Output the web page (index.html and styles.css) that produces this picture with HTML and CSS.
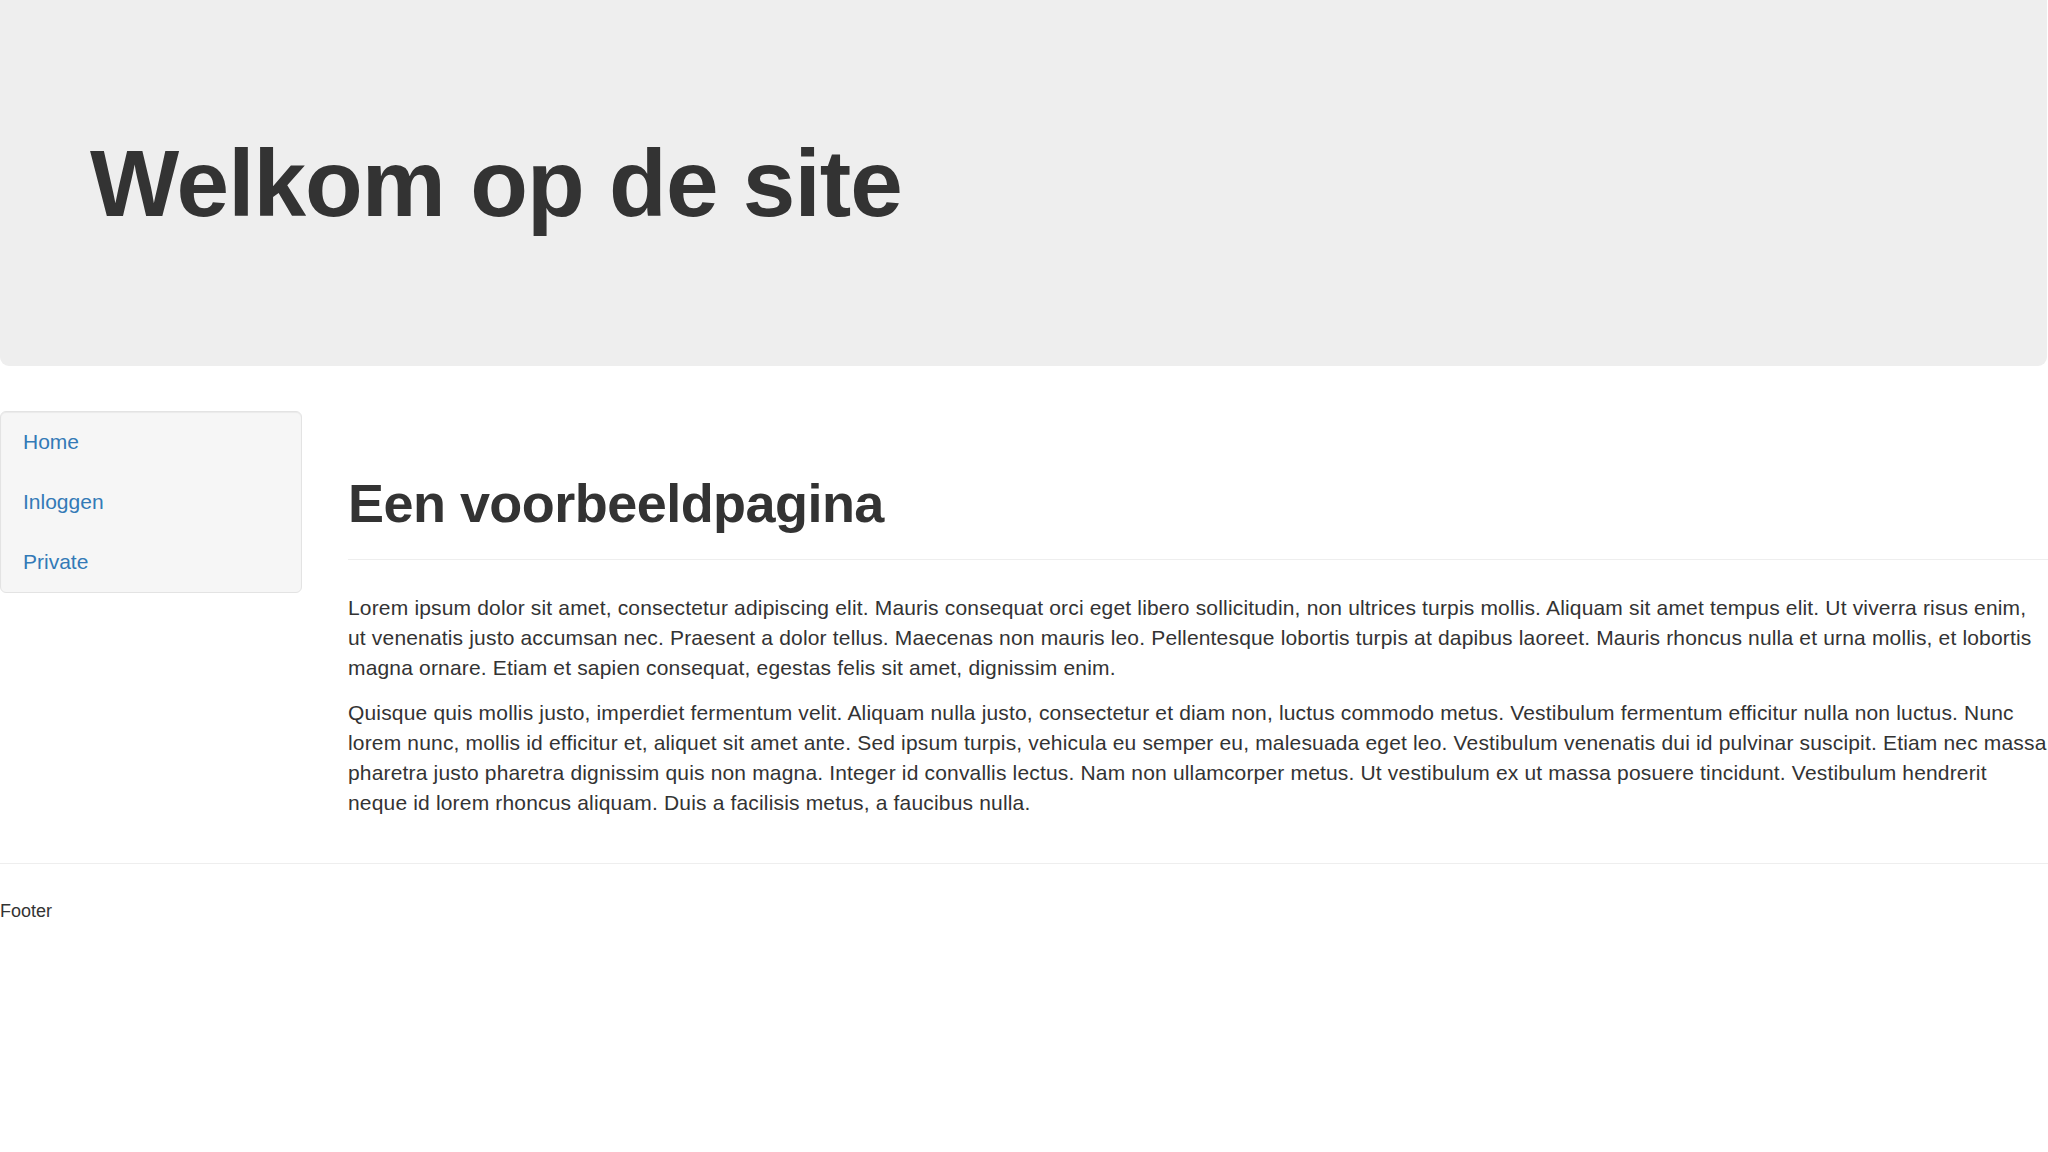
FILE: index.html
```html
<!DOCTYPE html>
<html lang="nl">
<head>
    <meta charset="UTF-8">
    <title>Welkom op de site</title>
    <link rel="stylesheet" href="styles.css">
</head>
<body>
    <div class="jumbotron">
        <h1>Welkom op de site</h1>
    </div>

    <div class="row">
        <div class="sidebar">
            <ul class="nav">
                <li><a href="#">Home</a></li>
                <li><a href="#">Inloggen</a></li>
                <li><a href="#">Private</a></li>
            </ul>
        </div>

        <div class="main">
            <div class="page-header">
                <h1>Een voorbeeldpagina</h1>
            </div>
            <p>Lorem ipsum dolor sit amet, consectetur adipiscing elit. Mauris consequat orci eget libero sollicitudin, non ultrices turpis mollis. Aliquam sit amet tempus elit. Ut viverra risus enim, ut venenatis justo accumsan nec. Praesent a dolor tellus. Maecenas non mauris leo. Pellentesque lobortis turpis at dapibus laoreet. Mauris rhoncus nulla et urna mollis, et lobortis magna ornare. Etiam et sapien consequat, egestas felis sit amet, dignissim enim.</p>
            <p>Quisque quis mollis justo, imperdiet fermentum velit. Aliquam nulla justo, consectetur et diam non, luctus commodo metus. Vestibulum fermentum efficitur nulla non luctus. Nunc lorem nunc, mollis id efficitur et, aliquet sit amet ante. Sed ipsum turpis, vehicula eu semper eu, malesuada eget leo. Vestibulum venenatis dui id pulvinar suscipit. Etiam nec massa pharetra justo pharetra dignissim quis non magna. Integer id convallis lectus. Nam non ullamcorper metus. Ut vestibulum ex ut massa posuere tincidunt. Vestibulum hendrerit neque id lorem rhoncus aliquam. Duis a facilisis metus, a faucibus nulla.</p>
        </div>
    </div>

    <hr class="footer-line">
    <footer class="footer">Footer</footer>
</body>
</html>
```

FILE: styles.css
```css
body {
    margin: 0;
    font-family: "Liberation Sans", Arial, Helvetica, sans-serif;
    font-size: 21px;
    line-height: 30px;
    letter-spacing: 0.17px;
    color: #333;
    background: #fff;
}
h1 {
    font-weight: 700;
    letter-spacing: -0.01em;
    margin: 0;
}
.jumbotron {
    box-sizing: border-box;
    width: 2047px;
    height: 366px;
    padding: 132px 90px 0;
    margin-bottom: 45px;
    background: #eee;
    border-radius: 0 0 9px 9px;
}
.jumbotron h1 {
    font-size: 94.5px;
    line-height: 1.1;
}
.row {
    display: flex;
    align-items: flex-start;
    gap: 46px;
}
.sidebar {
    box-sizing: border-box;
    width: 302px;
    flex: none;
    background: #f6f6f6;
    border: 1px solid #e3e3e3;
    border-radius: 6px;
    box-shadow: inset 0 1px 1px rgba(0, 0, 0, 0.05);
}
.nav {
    list-style: none;
    margin: 0;
    padding: 0;
}
.nav a {
    display: block;
    padding: 15px 22px;
    color: #337ab7;
    text-decoration: none;
    letter-spacing: 0;
}
.main {
    flex: 1;
    min-width: 0;
}
.page-header {
    margin: 63px 0 33px;
    padding-bottom: 13px;
    border-bottom: 1px solid #eee;
}
.page-header h1 {
    margin: 63px 0 13px;
    font-size: 54px;
    line-height: 1.1;
}
.main p {
    margin: 0 0 15px;
}
.footer-line {
    margin: 30px 0 30px;
    border: 0;
    border-top: 1px solid #eee;
}
.footer {
    font-size: 18px;
    line-height: 34px;
    letter-spacing: 0;
}
```
